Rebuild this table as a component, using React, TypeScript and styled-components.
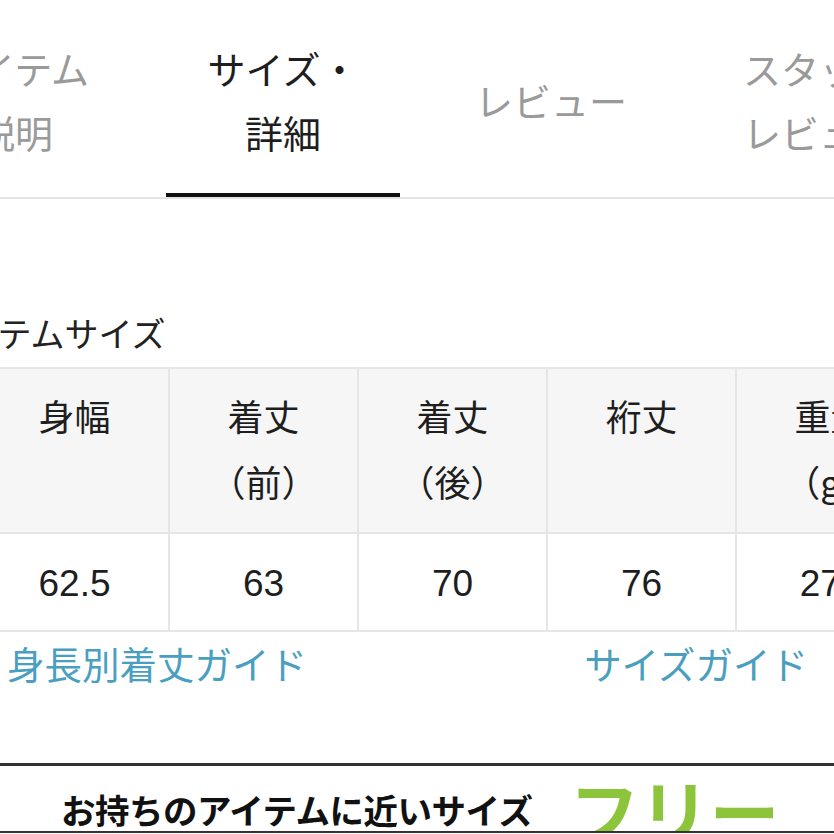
import React from "react";
import styled, { createGlobalStyle } from "styled-components";

const Global = createGlobalStyle`
  html, body { margin: 0; padding: 0; background: #fff; }
  body {
    font-family: "Noto Sans CJK JP", "Noto Sans", sans-serif;
    color: #222;
    overflow: hidden;
  }
`;

const Page = styled.div`
  width: 834px;
  height: 834px;
  overflow: hidden;
  background: #fff;
  display: flex;
  flex-direction: column;
  & > * { flex-shrink: 0; }
`;

const TabBar = styled.div`
  display: flex;
  height: 199px;
  box-sizing: border-box;
  border-bottom: 2px solid #e4e4e4;
  margin-left: -119px;
  width: calc(100% + 119px);
`;

const Tab = styled.div<{ $active?: boolean }>`
  flex: 0 0 234px;
  margin: 0 17px;
  box-sizing: border-box;
  height: 197px;
  padding-top: 7px;
  display: flex;
  align-items: center;
  justify-content: center;
  text-align: center;
  font-size: 38px;
  line-height: 64px;
  color: ${(p) => (p.$active ? "#1e1e1e" : "#9a9a9a")};
  border-bottom: 4px solid ${(p) => (p.$active ? "#111" : "transparent")};
  white-space: nowrap;
`;

const Title = styled.div`
  margin-top: 111px;
  margin-left: -68px;
  font-size: 34px;
  line-height: 46px;
  color: #222;
  height: 57px;
`;

const Table = styled.div`
  display: grid;
  grid-template-columns: repeat(5, 189px);
  margin-left: -19px;
  border-top: 2px solid #e6e6e6;
  width: 945px;
`;

const Cell = styled.div<{ $head?: boolean }>`
  box-sizing: border-box;
  height: ${(p) => (p.$head ? "165px" : "98px")};
  background: ${(p) => (p.$head ? "#f6f6f6" : "#fff")};
  border-right: 2px solid #e6e6e6;
  border-bottom: 2px solid #e6e6e6;
  padding-top: 13px;
  text-align: center;
  font-size: 36px;
  line-height: 66px;
  color: #1e1e1e;
`;

const Num = styled.span`
  font-family: "Liberation Sans", "Noto Sans", sans-serif;
  font-size: 37px;
`;

const Links = styled.div`
  display: flex;
  justify-content: space-between;
  padding: 0 26px 0 7px;
  margin-top: 7px;
  font-size: 37.5px;
  line-height: 48px;
  color: #4a9fc0;
`;

const Similar = styled.div`
  margin-top: 76px;
  border-top: 3px solid #333;
  border-bottom: 2px solid #333;
  display: flex;
  align-items: center;
  gap: 37px;
  padding-left: 61px;
  height: 70px;
  box-sizing: border-box;
  overflow: hidden;
`;

const SimilarLabel = styled.span`
  font-size: 34.5px;
  font-weight: 700;
  color: #111;
  letter-spacing: -0.5px;
  padding-top: 20px;
`;

const Free = styled.span`
  font-size: 70px;
  font-weight: 700;
  color: #8cc43c;
  line-height: 1;
  padding-top: 22px;
`;

const heads: [string, string][] = [
  ["身幅", ""],
  ["着丈", "（前）"],
  ["着丈", "（後）"],
  ["裄丈", ""],
  ["重量", "（g）"],
];
const values = ["62.5", "63", "70", "76", "270"];

export default function App() {
  return (
    <Page>
      <Global />
      <TabBar>
        <Tab>
          アイテム
          <br />
          説明
        </Tab>
        <Tab $active>
          サイズ・
          <br />
          詳細
        </Tab>
        <Tab>レビュー</Tab>
        <Tab>
          スタッフ
          <br />
          レビュー
        </Tab>
      </TabBar>
      <Title>アイテムサイズ</Title>
      <Table>
        {heads.map(([a, b], i) => (
          <Cell $head key={"h" + i}>
            {a}
            {b && <br />}
            {b}
          </Cell>
        ))}
        {values.map((v, i) => (
          <Cell key={"v" + i}>
            <Num>{v}</Num>
          </Cell>
        ))}
      </Table>
      <Links>
        <span>身長別着丈ガイド</span>
        <span>サイズガイド</span>
      </Links>
      <Similar>
        <SimilarLabel>お持ちのアイテムに近いサイズ</SimilarLabel>
        <Free>フリー</Free>
      </Similar>
    </Page>
  );
}
